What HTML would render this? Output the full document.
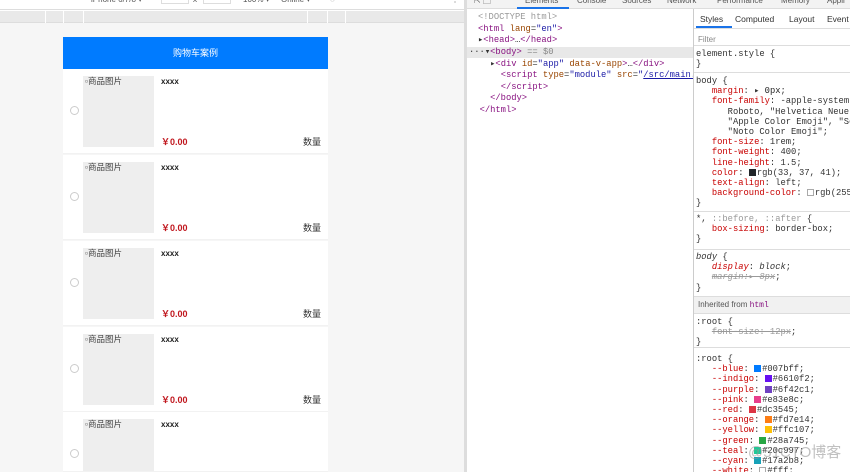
<!DOCTYPE html>
<html style="overflow:hidden;width:850px;height:472px"><head><meta charset="utf-8"><style>
*{box-sizing:border-box;margin:0;padding:0}
body{width:850px;height:472px;overflow:hidden;position:relative;background:#fff;font-family:"Liberation Sans","Noto Sans CJK SC",sans-serif}
.a{position:absolute}
.m{font-family:"Liberation Mono","DejaVu Sans Mono",monospace;font-size:8.8px;white-space:pre;color:#333;line-height:10.2px}
.item{position:absolute;left:63px;width:265px;height:85px;background:#fff;border-bottom:1px solid #f2f2f2;overflow:hidden}
.img{position:absolute;left:20px;top:7px;width:71px;height:71px;background:#eee;font-size:8.5px;color:#444;padding-left:2px;line-height:11px}
.radio{position:absolute;left:7px;top:37px;width:9px;height:9px;border:1px solid #ccc;border-radius:50%;background:#fff}
.t{position:absolute;left:98px;top:8px;font-size:8px;font-weight:bold;color:#222}
.p{position:absolute;left:98px;top:66px;font-size:9px;font-weight:bold;color:#c0161d}
.q{position:absolute;right:7px;top:66px;font-size:9px;color:#333}
.k{color:#c80000}.v{color:#222}.tg{color:#881280}.at{color:#994500}.av{color:#1a1aa6}
.sw{display:inline-block;width:7px;height:7px;vertical-align:-1px;margin-right:1px}
</style></head><body>
<div class="a" style="left:0;top:0;width:466px;height:10px;background:#fff;border-bottom:1px solid #ddd;font-size:8px;color:#555;line-height:4px">
<span class="a" style="left:91px;top:-2px">iPhone 6/7/8 ▾</span>
<span class="a" style="left:161px;top:-2px;width:28px;height:6px;border:1px solid #ddd"></span>
<span class="a" style="left:193px;top:-2px">x</span>
<span class="a" style="left:203px;top:-2px;width:28px;height:6px;border:1px solid #ddd"></span>
<span class="a" style="left:243px;top:-2px">100% ▾</span>
<span class="a" style="left:281px;top:-2px">Online ▾</span>
<span class="a" style="left:330px;top:-2px">◌</span>
<span class="a" style="left:451px;top:-2px">⋮</span>
</div>
<div class="a" style="left:0;top:11px;width:466px;height:12px;background:#e9e9e9;border-bottom:1px solid #ddd"></div>
<div class="a" style="left:45px;top:11px;width:1px;height:12px;background:#fff"></div>
<div class="a" style="left:63px;top:11px;width:1px;height:12px;background:#fff"></div>
<div class="a" style="left:83px;top:11px;width:1px;height:12px;background:#fff"></div>
<div class="a" style="left:307px;top:11px;width:1px;height:12px;background:#fff"></div>
<div class="a" style="left:327px;top:11px;width:1px;height:12px;background:#fff"></div>
<div class="a" style="left:345px;top:11px;width:1px;height:12px;background:#fff"></div>
<div class="a" style="left:0;top:23px;width:466px;height:449px;background:#f6f6f6"></div>
<div class="a" style="left:63px;top:37px;width:265px;height:32px;background:#007bff;color:#fff;font-size:9px;text-align:center;line-height:32px">购物车案例</div>
<div class="item" style="top:69px"><div class="radio"></div><div class="img">▫商品图片</div><div class="t">xxxx</div><div class="p">￥0.00</div><div class="q">数量</div></div>
<div class="item" style="top:155px"><div class="radio"></div><div class="img">▫商品图片</div><div class="t">xxxx</div><div class="p">￥0.00</div><div class="q">数量</div></div>
<div class="item" style="top:241px"><div class="radio"></div><div class="img">▫商品图片</div><div class="t">xxxx</div><div class="p">￥0.00</div><div class="q">数量</div></div>
<div class="item" style="top:327px"><div class="radio"></div><div class="img">▫商品图片</div><div class="t">xxxx</div><div class="p">￥0.00</div><div class="q">数量</div></div>
<div class="item" style="top:412px;height:60px"><div class="radio"></div><div class="img">▫商品图片</div><div class="t">xxxx</div></div>
<div class="a" style="left:464px;top:0;width:3px;height:472px;background:#ddd"></div>
<div class="a" style="left:467px;top:0;width:383px;height:9px;background:#f3f3f3;border-bottom:1px solid #ddd;font-size:8px;color:#555;line-height:2px">
<span class="a" style="left:7px">⇱ ▢</span><span class="a" style="left:58px">Elements</span><span class="a" style="left:50px;top:7px;width:52px;height:2px;background:#1a73e8"></span>
<span class="a" style="left:110px">Console</span><span class="a" style="left:155px">Sources</span><span class="a" style="left:200px">Network</span><span class="a" style="left:250px">Performance</span><span class="a" style="left:314px">Memory</span><span class="a" style="left:360px">Appli</span></div>
<div class="a" style="left:467px;top:47px;width:226px;height:11px;background:#e8e8e8"></div>
<div class="a m" style="left:478px;top:12px;line-height:11.6px"><span style="color:#999">&lt;!DOCTYPE html&gt;</span>
<span class="tg">&lt;html</span> <span class="at">lang</span>=<span class="av">"en"</span><span class="tg">&gt;</span>
▸<span class="tg">&lt;head&gt;</span>…<span class="tg">&lt;/head&gt;</span>
</div>
<div class="a m" style="left:469px;top:47px;line-height:11.6px;width:224px;overflow:hidden">···▾<span class="tg">&lt;body&gt;</span> <span style="color:#888">== $0</span>
    ▸<span class="tg">&lt;div</span> <span class="at">id</span>=<span class="av">"app"</span> <span class="at">data-v-app</span><span class="tg">&gt;</span>…<span class="tg">&lt;/div&gt;</span>
      <span class="tg">&lt;script</span> <span class="at">type</span>=<span class="av">"module"</span> <span class="at">src</span>=<span class="av">"<u>/src/main.js</u>"</span><span class="tg">&gt;</span>
      <span class="tg">&lt;/script&gt;</span>
    <span class="tg">&lt;/body&gt;</span>
  <span class="tg">&lt;/html&gt;</span></div>
<div class="a" style="left:693px;top:9px;width:1px;height:463px;background:#ccc"></div>
<div class="a" style="left:694px;top:9px;width:156px;height:20px;border-bottom:1px solid #ddd;font-size:8.5px;color:#333;line-height:20px">
<span class="a" style="left:6px">Styles</span><span class="a" style="left:2px;top:17px;width:36px;height:2px;background:#1a73e8"></span>
<span class="a" style="left:41px">Computed</span><span class="a" style="left:95px">Layout</span><span class="a" style="left:133px">Event</span></div>
<div class="a" style="left:694px;top:30px;width:156px;height:16px;border-bottom:1px solid #ddd;font-size:8px;color:#888;padding:5px 4px">Filter</div>
<div style="position:absolute;left:694px;top:46px;width:156px;height:426px;overflow:hidden">
<div class="a m" style="left:2px;top:3px">element.style {
}</div>
<div class="a" style="left:0;top:26px;width:156px;height:1px;background:#ddd"></div>
<div class="a m" style="left:2px;top:30px">body {
   <span class="k">margin</span>: ▸ <span class="v">0px</span>;
   <span class="k">font-family</span>: -apple-system, Bl
      Roboto, "Helvetica Neue", A
      "Apple Color Emoji", "Segoe
      "Noto Color Emoji";
   <span class="k">font-size</span>: 1rem;
   <span class="k">font-weight</span>: 400;
   <span class="k">line-height</span>: 1.5;
   <span class="k">color</span>: <span class="sw" style="background:#212529"></span>rgb(33, 37, 41);
   <span class="k">text-align</span>: left;
   <span class="k">background-color</span>: <span class="sw" style="border:1px solid #aaa"></span>rgb(255, 2
}</div>
<div class="a" style="left:0;top:165px;width:156px;height:1px;background:#ddd"></div>
<div class="a m" style="left:2px;top:168px">*, <span style="color:#999">::before, ::after</span> {
   <span class="k">box-sizing</span>: border-box;
}</div>
<div class="a" style="left:0;top:203px;width:156px;height:1px;background:#ddd"></div>
<div class="a m" style="left:2px;top:206px"><i>body</i> {
   <i class="k">display</i>: <i>block</i>;
   <s style="color:#999"><i>margin:▸ 8px</i></s>;
}</div>
<div class="a" style="left:0;top:250px;width:156px;height:18px;background:#f1f1f1;border-top:1px solid #ddd;border-bottom:1px solid #ddd;font-size:8px;color:#555;padding:3px 4px">Inherited from <span style="font-family:'Liberation Mono',monospace;color:#881280">html</span></div>
<div class="a m" style="left:2px;top:271px">:root {
   <s style="color:#999">font-size: 12px</s>;
}</div>
<div class="a" style="left:0;top:301px;width:156px;height:1px;background:#ddd"></div>
<div class="a m" style="left:2px;top:308px">:root {
   <span class="k">--blue</span>: <span class="sw" style="background:#007bff"></span>#007bff;
   <span class="k">--indigo</span>: <span class="sw" style="background:#6610f2"></span>#6610f2;
   <span class="k">--purple</span>: <span class="sw" style="background:#6f42c1"></span>#6f42c1;
   <span class="k">--pink</span>: <span class="sw" style="background:#e83e8c"></span>#e83e8c;
   <span class="k">--red</span>: <span class="sw" style="background:#dc3545"></span>#dc3545;
   <span class="k">--orange</span>: <span class="sw" style="background:#fd7e14"></span>#fd7e14;
   <span class="k">--yellow</span>: <span class="sw" style="background:#ffc107"></span>#ffc107;
   <span class="k">--green</span>: <span class="sw" style="background:#28a745"></span>#28a745;
   <span class="k">--teal</span>: <span class="sw" style="background:#20c997"></span>#20c997;
   <span class="k">--cyan</span>: <span class="sw" style="background:#17a2b8"></span>#17a2b8;
   <span class="k">--white</span>: <span class="sw" style="border:1px solid #aaa"></span>#fff;</div>
</div>
<div class="a" style="left:748px;top:441px;font-size:15px;color:rgba(150,150,150,0.6)">@51CTO博客</div>
</body></html>
